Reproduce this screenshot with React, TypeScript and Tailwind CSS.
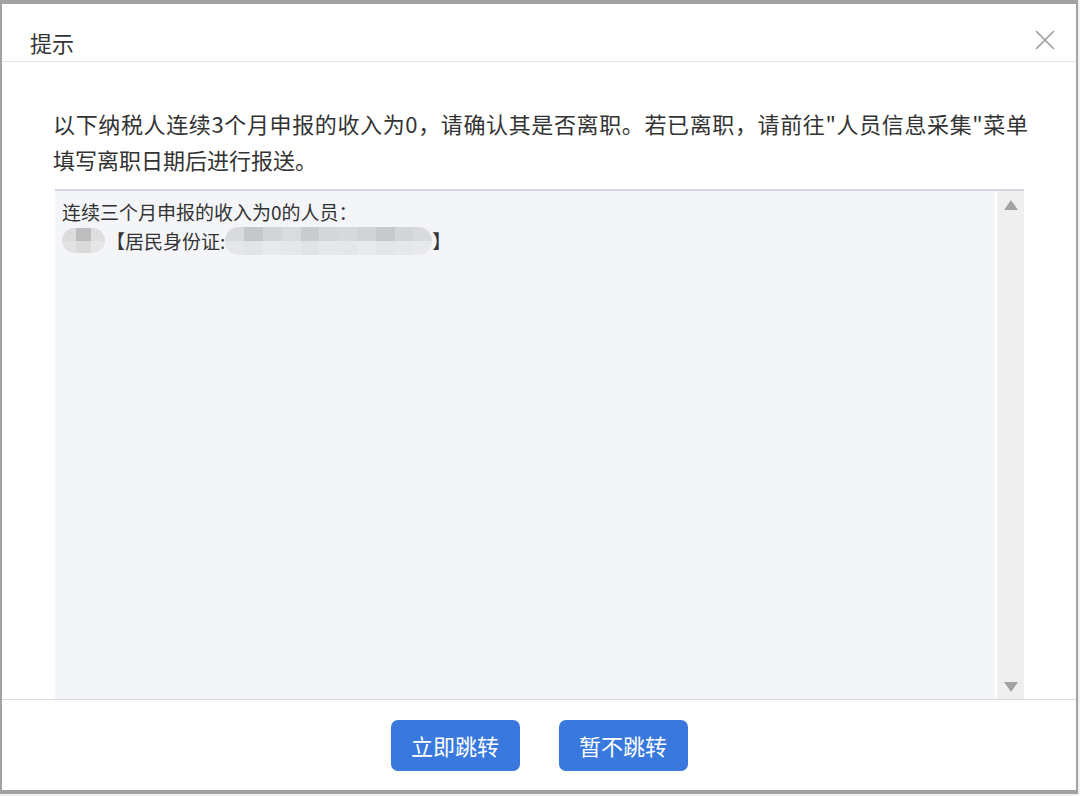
import React from "react";

const FONT = { fontFamily: '"Noto Sans CJK SC", "Noto Sans", sans-serif' };

const nameCells = ["#dcdcdc", "#bdbdbd", "#dedede", "#e2e2e2", "#dadada", "#e6e6e6"];
const idTop = ["#d9dadc", "#c6c7cb", "#d3d4d6", "#dadbdf", "#cacbcf", "#d6d7da", "#d8d9dc", "#d2d3d6", "#c8c9cd", "#d4d5d8", "#d9dadd"];
const idBottom = ["#e5e6e9", "#e3e4e7", "#e8e9ec", "#e6e7ea", "#e2e3e6", "#e7e8eb", "#e5e6e9", "#e9eaed", "#e4e5e8", "#e6e7ea", "#e8e9ec"];

export default function App() {
  return (
    <div className="w-[1080px] h-[796px] bg-[#f2f2f2] overflow-hidden" style={FONT}>
      <div className="w-[1078px] h-[794px] bg-[#a2a2a2] pt-[4px] pl-[2px] pr-[2px] pb-[4px]">
        <div className="w-full h-full bg-white flex flex-col">
          {/* header */}
          <div className="h-[58px] shrink-0 flex items-start justify-between border-b border-[#e3e3e9] pl-[28px] pr-[21px]">
            <div className="pt-[23px] text-[22px] leading-[30px] text-[#333]">提示</div>
            <svg className="mt-[26px]" width="20" height="20" viewBox="0 0 20 20">
              <path d="M1 1 L19 19 M19 1 L1 19" stroke="#9b9b9b" strokeWidth="1.6" fill="none" />
            </svg>
          </div>
          {/* body */}
          <div className="flex-1 flex flex-col pt-[43px] pl-[51px] pr-[52px] min-h-0">
            <div className="text-[22px] leading-[36px] text-[#333] whitespace-nowrap">
              <div className="w-[975px] text-justify [text-align-last:justify]">
                以下纳税人连续3个月申报的收入为0，请确认其是否离职。若已离职，请前往"人员信息采集"菜单
              </div>
              <div>填写离职日期后进行报送。</div>
            </div>
            <div className="mt-[12px] ml-[2px] flex-1 flex border-t-2 border-[#d5d6dd] bg-[#f4f5f8] min-h-0">
              <div className="flex-1 pl-[7px] pt-[6px] text-[19px] leading-[29px] text-[#333]">
                <div>连续三个月申报的收入为0的人员：</div>
                <div className="flex items-center h-[29px]">
                  <div className="w-[43px] h-[25px] rounded-full overflow-hidden grid grid-cols-3 grid-rows-2 blur-[0.6px]">
                    {nameCells.map((c, i) => (
                      <div key={i} style={{ background: c }} />
                    ))}
                  </div>
                  <span className="ml-[1px]">【居民身份证:</span>
                  <div className="w-[207px] h-[28px] rounded-full overflow-hidden grid grid-cols-11 grid-rows-2 blur-[0.6px]">
                    {idTop.concat(idBottom).map((c, i) => (
                      <div key={i} style={{ background: c }} />
                    ))}
                  </div>
                  <span>】</span>
                </div>
              </div>
              <div className="w-[29px] shrink-0 border-l-2 border-white bg-[#efefef] flex flex-col items-center justify-between pt-[9px] pb-[7px]">
                <svg width="14" height="10" viewBox="0 0 14 10">
                  <path d="M7 0 L14 10 L0 10 Z" fill="#a3a3a3" />
                </svg>
                <svg width="14" height="10" viewBox="0 0 14 10">
                  <path d="M0 0 L14 0 L7 10 Z" fill="#a3a3a3" />
                </svg>
              </div>
            </div>
          </div>
          {/* footer */}
          <div className="h-[91px] shrink-0 border-t border-[#dcdce0] flex items-center justify-center gap-[39px]">
            <button className="w-[129px] h-[51px] rounded-[7px] bg-[#3979dd] text-white text-[22px]">立即跳转</button>
            <button className="w-[129px] h-[51px] rounded-[7px] bg-[#3979dd] text-white text-[22px]">暂不跳转</button>
          </div>
        </div>
      </div>
    </div>
  );
}
